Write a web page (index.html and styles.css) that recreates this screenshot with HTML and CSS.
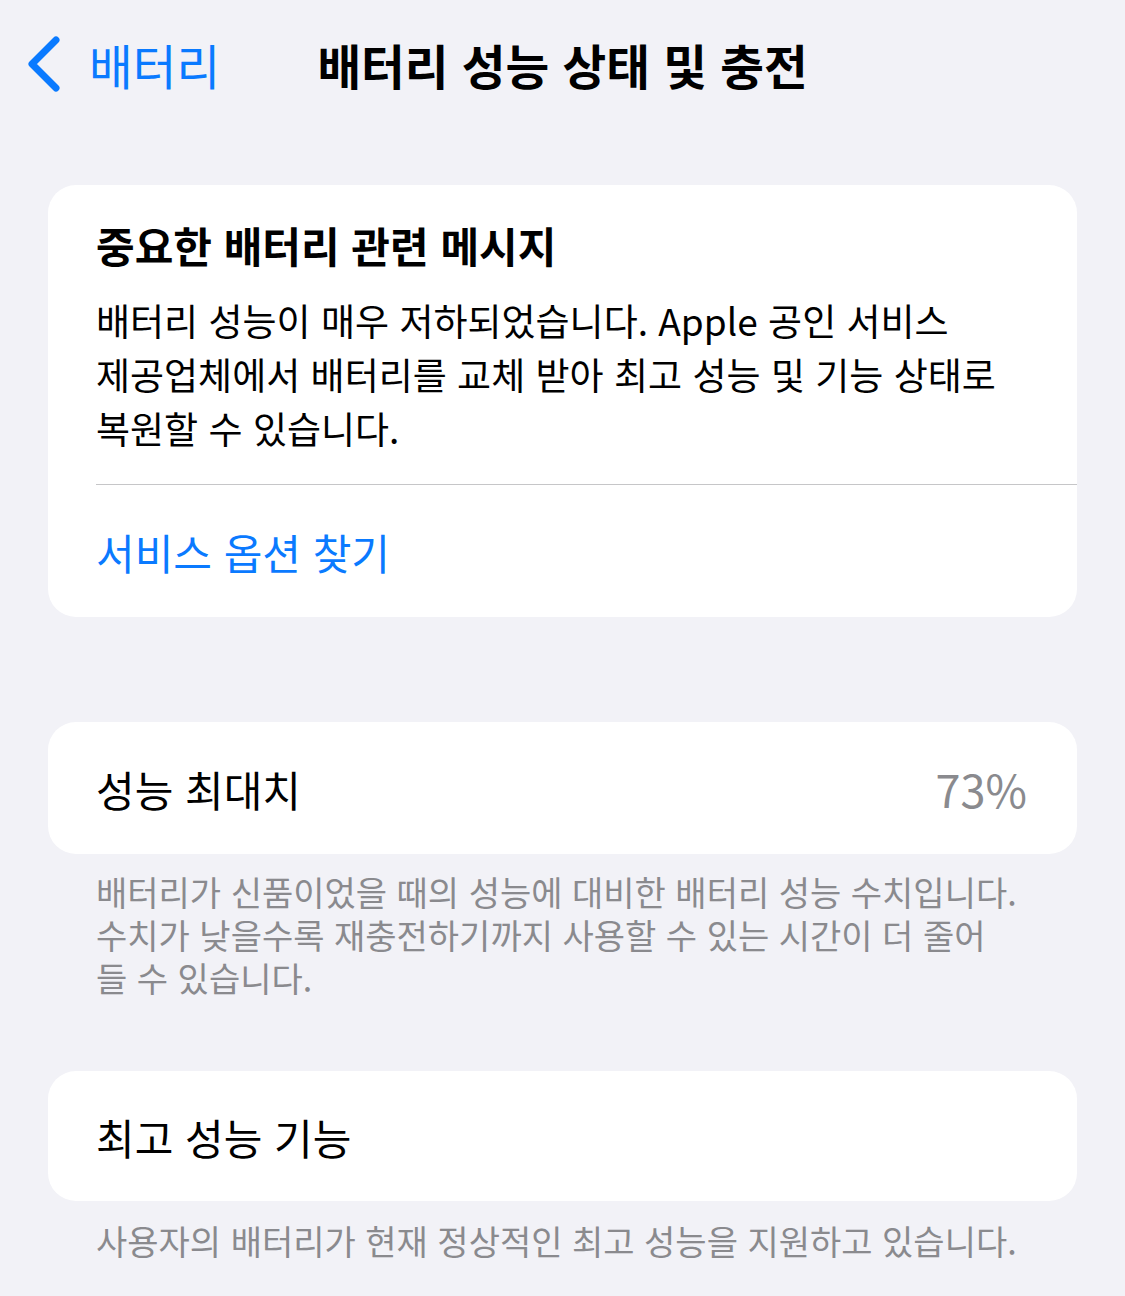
FILE: index.html
```html
<!DOCTYPE html>
<html lang="ko">
<head>
  <meta charset="UTF-8">
  <meta name="viewport" content="width=device-width, initial-scale=1">
  <title>배터리 성능 상태 및 충전</title>
  <link rel="stylesheet" href="styles.css">
</head>
<body>
  <!-- Barre de navigation -->
  <header class="nav">
    <a class="nav-back" href="#">
      <svg class="chevron" width="40" height="60" viewBox="0 0 40 60">
        <path d="M32 5 L8 29 L32 53" fill="none" stroke="#0a7aff" stroke-width="7" stroke-linecap="round" stroke-linejoin="round"/>
      </svg>
      <span>배터리</span>
    </a>
    <h1 class="nav-title">배터리 성능 상태 및 충전</h1>
    <div></div>
  </header>

  <main class="content">
    <!-- Message important -->
    <section class="card">
      <h2 class="card-title">중요한 배터리 관련 메시지</h2>
      <p class="card-text">배터리 성능이 매우 저하되었습니다. Apple 공인 서비스 제공업체에서 배터리를 교체 받아 최고 성능 및 기능 상태로 복원할 수 있습니다.</p>
      <div class="separator"></div>
      <a class="card-link" href="#">서비스 옵션 찾기</a>
    </section>

    <!-- Capacité maximale -->
    <section class="card row card-capacity">
      <span class="row-label">성능 최대치</span>
      <span class="row-value">73%</span>
    </section>
    <p class="footnote">배터리가 신품이었을 때의 성능에 대비한 배터리 성능 수치입니다. 수치가 낮을수록 재충전하기까지 사용할 수 있는 시간이 더 줄어<br>들 수 있습니다.</p>

    <!-- Performances de pointe -->
    <section class="card row card-peak">
      <span class="row-label">최고 성능 기능</span>
    </section>
    <p class="footnote footnote-last">사용자의 배터리가 현재 정상적인 최고 성능을 지원하고 있습니다.</p>
  </main>
</body>
</html>
```

FILE: styles.css
```css
/* Style de base */
body {
  margin: 0;
  background-color: #f2f2f7;
  color: #000;
  font-family: "Noto Sans CJK KR", "Noto Sans", sans-serif;
  word-break: keep-all;
}

/* Barre de navigation */
.nav {
  display: grid;
  grid-template-columns: 1fr auto 1fr;
  align-items: center;
  height: 130px;
}
.nav-back {
  display: flex;
  align-items: center;
  gap: 25px;
  padding-left: 24px;
  color: #0a7aff;
  text-decoration: none;
  font-size: 47.5px;
  line-height: 1;
}
.chevron {
  display: block;
}
.nav-title {
  margin: 0;
  font-size: 47.5px;
  font-weight: 700;
  line-height: 1;
}

/* Contenu */
.content {
  padding: 55px 48px 0 48px;
}
.card {
  background: #fff;
  border-radius: 28px;
  padding-left: 48px;
}
.card-title {
  margin: 0;
  padding-top: 35px;
  font-size: 42px;
  font-weight: 700;
  line-height: 50px;
}
.card-text {
  margin: 23px 0 0 0;
  padding-right: 40px;
  font-size: 37px;
  line-height: 54px;
}
.separator {
  margin-top: 29px;
  height: 1px;
  background: #c6c6c8;
}
.card-link {
  display: flex;
  align-items: center;
  height: 132px;
  color: #0a7aff;
  text-decoration: none;
  font-size: 42px;
}

/* Lignes simples */
.row {
  display: flex;
  align-items: center;
  justify-content: space-between;
  padding-right: 50px;
  font-size: 42px;
}
.card-capacity {
  margin-top: 105px;
  height: 132px;
}
.card-peak {
  margin-top: 72px;
  height: 130px;
}
.row-value {
  color: #8a8a8e;
  font-size: 45px;
}

/* Notes de bas de section */
.footnote {
  margin: 16px 0 0 0;
  padding: 0 40px 0 48px;
  color: #8a8a8e;
  font-size: 34px;
  line-height: 43px;
}
.footnote-last {
  margin-top: 18px;
}
```
